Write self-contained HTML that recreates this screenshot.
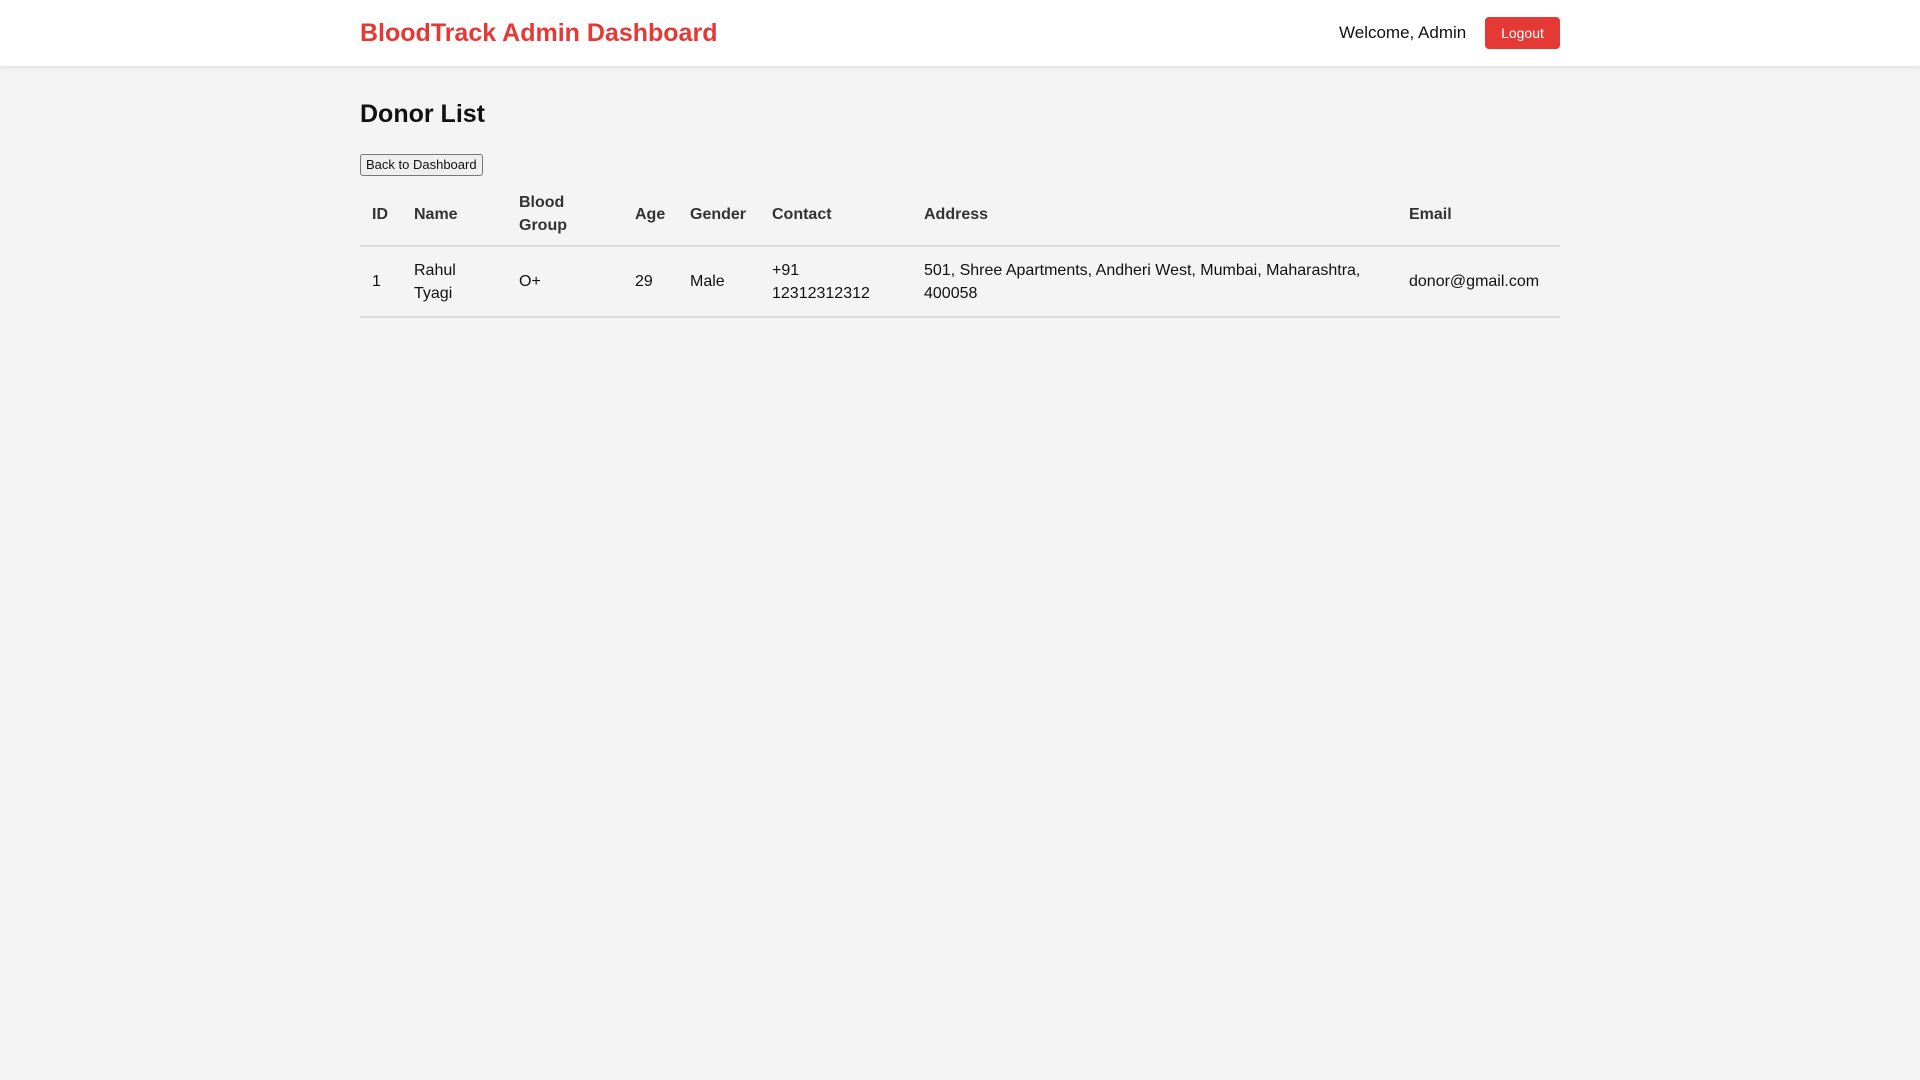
<!DOCTYPE html>
<html><head><style>
body{margin:0;background:#f4f4f4;font-family:"Liberation Sans",sans-serif;color:#111;}
.hdr{height:66px;background:#fff;box-shadow:0 2px 4px rgba(0,0,0,0.08);position:relative;}
.in{width:1200px;margin:0 auto;position:relative;}
.title{position:absolute;left:0;top:17px;font-size:25px;font-weight:bold;color:#e53935;line-height:32px;}
.wel{position:absolute;left:979px;top:22px;font-size:17px;line-height:22px;}
.lo{position:absolute;left:1125px;top:17px;width:75px;height:32px;background:#e53935;color:#fff;border-radius:4px;font-size:14px;line-height:32px;text-align:center;}
h2{position:absolute;left:0;top:32px;margin:0;font-size:25px;line-height:32px;}
.btn{position:absolute;left:0;top:88px;height:20px;padding:0 5px;border:1px solid #777;border-radius:3px;background:#efefef;font-size:13px;line-height:20px;box-sizing:content-box;}
table{position:absolute;left:0;top:117px;width:1200px;border-collapse:collapse;table-layout:fixed;font-size:16px;}
th{text-align:left;color:#333;padding:0 12px;height:62px;line-height:23px;border-bottom:2px solid #ddd;}
td{padding:0 12px;height:69px;line-height:23px;border-bottom:2px solid #ddd;}
</style></head><body>
<div class="hdr"><div class="in"><div class="title">BloodTrack Admin Dashboard</div><div class="wel">Welcome, Admin</div><div class="lo">Logout</div></div></div>
<div class="in">
<h2>Donor List</h2>
<div class="btn">Back to Dashboard</div>
<table>
<colgroup><col style="width:42px"><col style="width:105px"><col style="width:116px"><col style="width:55px"><col style="width:82px"><col style="width:152px"><col style="width:485px"><col style="width:163px"></colgroup>
<tr><th>ID</th><th>Name</th><th>Blood<br>Group</th><th>Age</th><th>Gender</th><th>Contact</th><th>Address</th><th>Email</th></tr>
<tr><td>1</td><td>Rahul<br>Tyagi</td><td>O+</td><td>29</td><td>Male</td><td>+91<br>12312312312</td><td>501, Shree Apartments, Andheri West, Mumbai, Maharashtra,<br>400058</td><td style="white-space:nowrap">donor@gmail.com</td></tr>
</table>
</div>
</body></html>
